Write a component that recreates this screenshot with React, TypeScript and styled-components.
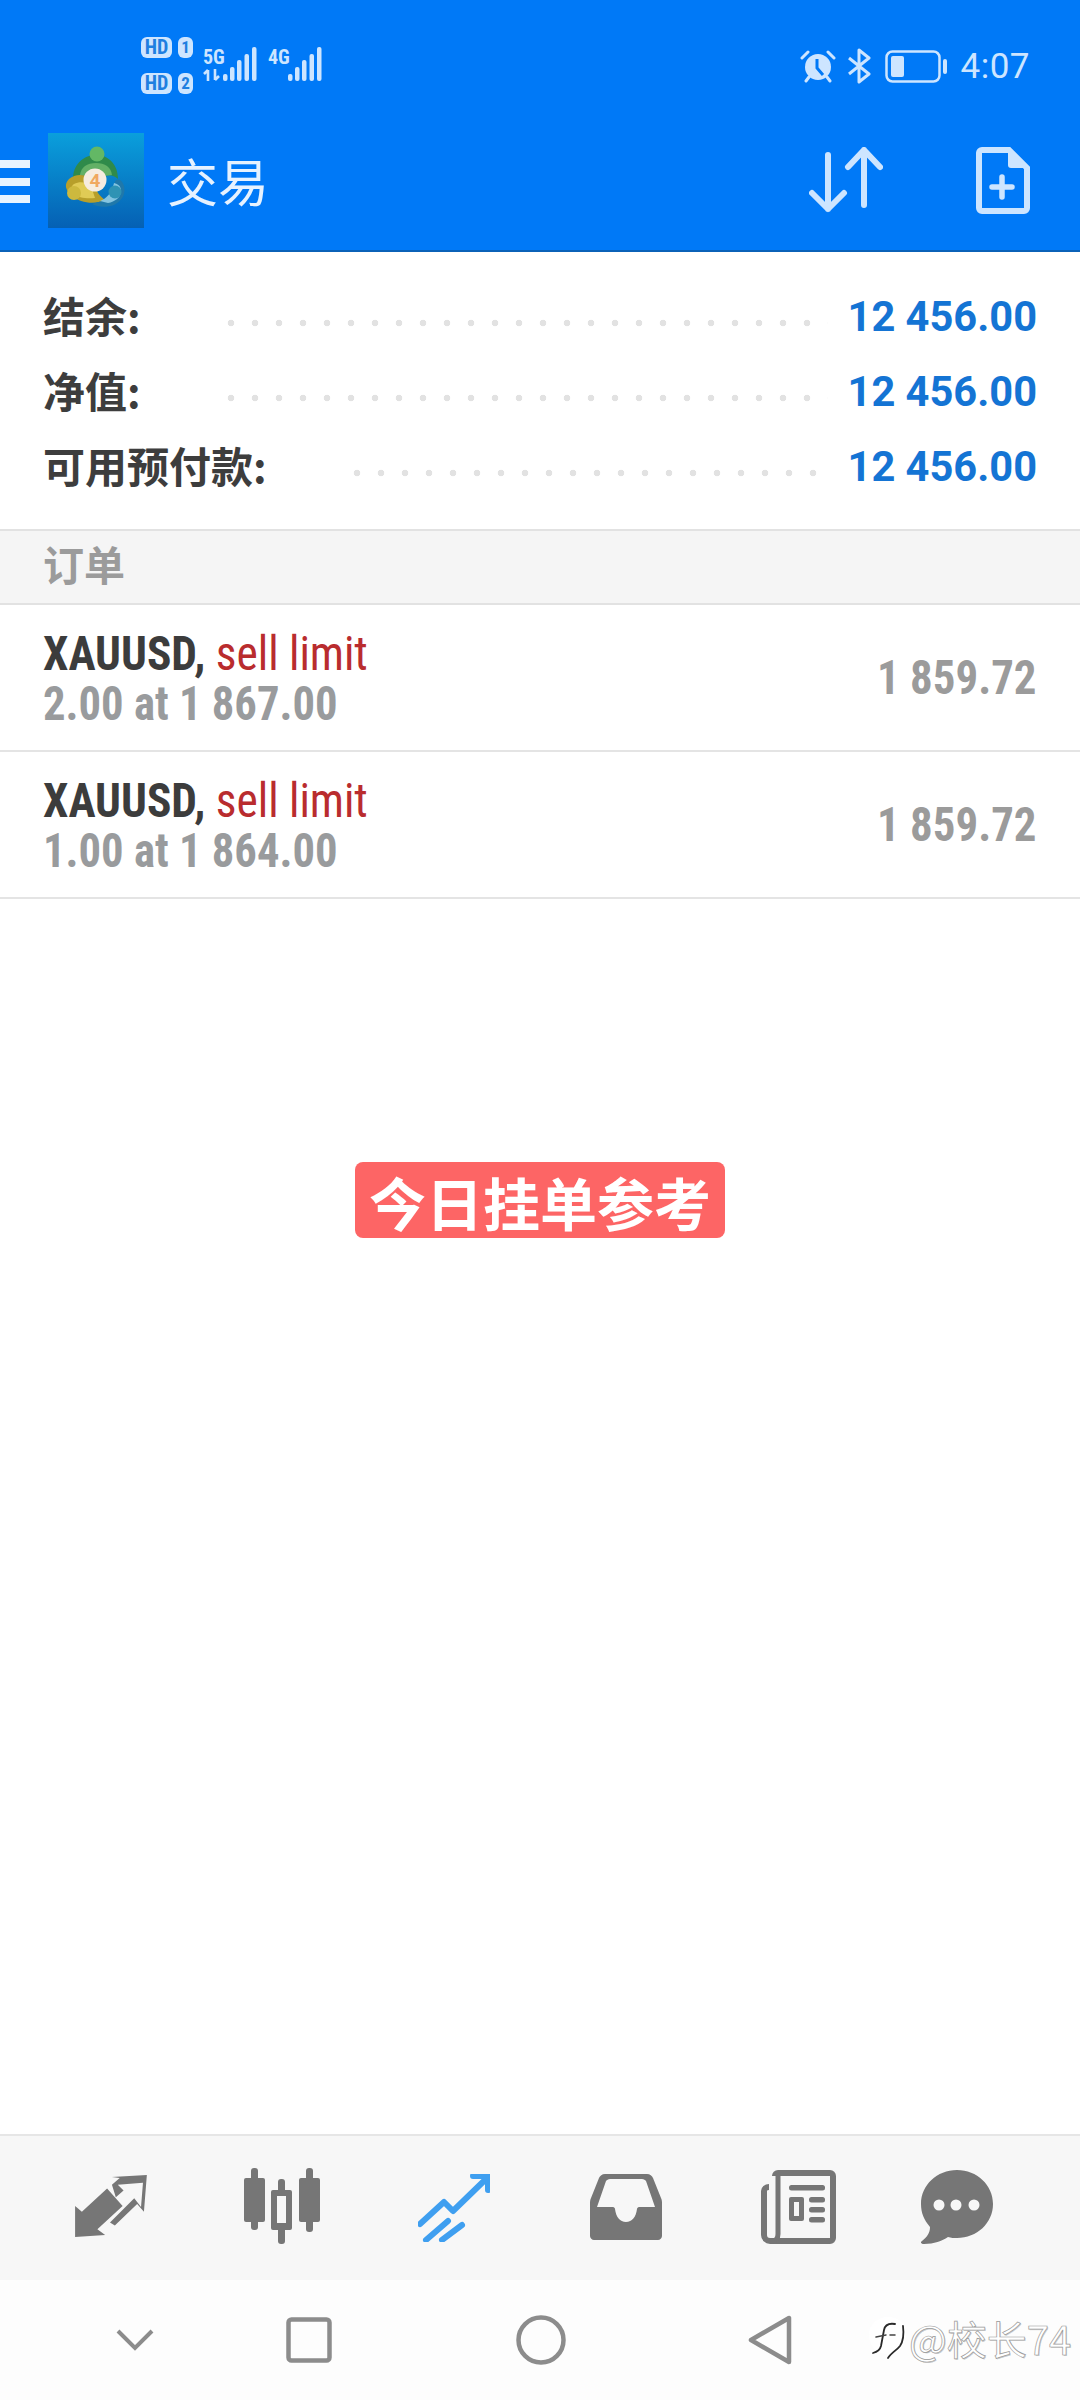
import React from 'react';
import styled, { createGlobalStyle } from 'styled-components';

const GlobalStyle = createGlobalStyle`
  html, body {
    margin: 0;
    padding: 0;
    background: #fff;
  }
  * {
    box-sizing: border-box;
  }
`;

const CJK = `"Noto Sans CJK SC", "Noto Sans", sans-serif`;
const LATIN = `Roboto, "Liberation Sans", sans-serif`;
const ICON_TINT = '#cde5ff';

const Page = styled.div`
  position: relative;
  width: 1080px;
  height: 2400px;
  display: flex;
  flex-direction: column;
  overflow: hidden;
  background: #fff;
`;

const Header = styled.header`
  height: 252px;
  flex: none;
  background: #0079f7;
  border-bottom: 2px solid #0b62b8;
  display: flex;
  flex-direction: column;
`;

const StatusBar = styled.div`
  height: 133px;
  flex: none;
  padding: 37px 50px 0 141px;
  display: flex;
  justify-content: space-between;
  align-items: flex-start;
  color: ${ICON_TINT};
`;

const StatusLeft = styled.div`
  display: flex;
  align-items: flex-start;
`;

const StatusRight = styled.div`
  display: flex;
  align-items: center;
  margin-top: 11px;
`;

const SimColumn = styled.div`
  display: flex;
  flex-direction: column;
  gap: 15px;
`;

const SimRow = styled.div`
  display: flex;
  gap: 6px;
`;

const HdBadge = styled.span`
  width: 31px;
  height: 21px;
  border-radius: 6px;
  background: ${ICON_TINT};
  color: #1f7fe0;
  font: 700 20px/21px ${LATIN};
  font-stretch: 75%;
  text-align: center;
`;

const SimBadge = styled(HdBadge)`
  width: 15px;
  font-size: 17px;
`;

const SignalGroup = styled.div<{ $left: number }>`
  margin-left: ${(p) => p.$left}px;
  margin-top: 10px;
  display: flex;
  align-items: flex-end;
`;

const NetworkStack = styled.div`
  width: 19px;
  height: 34px;
  display: flex;
  flex-direction: column;
  justify-content: space-between;
  font: 700 20px/20px ${LATIN};
  font-stretch: 75%;
`;

const Clock = styled.span`
  margin-left: 14px;
  font: 400 35px/1 ${LATIN};
  letter-spacing: 0.5px;
`;

const Toolbar = styled.div`
  flex: 1;
  display: flex;
  align-items: flex-start;
`;

const Burger = styled.div`
  width: 30px;
  height: 43px;
  margin-top: 27px;
  display: flex;
  flex-direction: column;
  justify-content: space-between;
  flex: none;
  span {
    height: 8px;
    background: #e8f4ff;
  }
`;

const Logo = styled.svg`
  width: 96px;
  height: 95px;
  margin-left: 18px;
  flex: none;
`;

const Title = styled.h1`
  margin: 17px 0 0 23px;
  flex: 1;
  color: #e6f2ff;
  font: 400 51px/60px ${CJK};
`;

const ToolbarActions = styled.div`
  display: flex;
  align-items: flex-start;
  padding: 14px 50px 0 0;
  gap: 92px;
`;

const Summary = styled.section`
  height: 277px;
  flex: none;
  padding: 29px 43px 0;
`;

const SummaryRow = styled.div`
  height: 75px;
  display: flex;
  align-items: center;
`;

const SummaryLabel = styled.span`
  margin-bottom: 8px;
  color: #3d3d3d;
  font: 700 42px/1 ${CJK};
`;

const Leader = styled.span`
  flex: 1;
  height: 8px;
  margin: 8px 20px 0 86px;
  background-image: radial-gradient(circle at 4px 4px, #e2e2e2 3px, transparent 3.6px);
  background-size: 24px 8px;
  background-repeat: repeat-x;
`;

const Amount = styled.span`
  margin-bottom: 3px;
  color: #1474d4;
  font: 700 41.6px/1 ${LATIN};
`;

const SectionHeading = styled.div`
  height: 76px;
  flex: none;
  padding: 0 0 8px 43px;
  display: flex;
  align-items: center;
  background: #f5f5f5;
  border-top: 2px solid #e2e2e2;
  border-bottom: 2px solid #e2e2e2;
  color: #9b9b9b;
  font: 700 41px/1 ${CJK};
`;

const OrderRow = styled.div`
  height: 147px;
  flex: none;
  padding: 0 43px;
  display: flex;
  align-items: center;
  justify-content: space-between;
  border-bottom: 2px solid #e4e4e4;
`;

const OrderInfo = styled.div`
  display: flex;
  flex-direction: column;
  margin-top: 2px;
`;

const OrderTitle = styled.div`
  height: 50px;
  font: 400 48px/50px ${LATIN};
  font-stretch: 75%;
  color: #b92c2e;
  white-space: nowrap;
  transform: scaleX(0.945);
  transform-origin: left center;
  b {
    font-weight: 700;
    color: #3c3c3c;
  }
`;

const OrderDetail = styled.div`
  height: 50px;
  font: 700 48px/50px ${LATIN};
  font-stretch: 75%;
  color: #999b9d;
  white-space: nowrap;
  transform: scaleX(0.93);
  transform-origin: left center;
`;

const OrderPrice = styled.div`
  font: 700 48px/1 ${LATIN};
  font-stretch: 75%;
  color: #9b9b9b;
  transform: scaleX(0.935);
  transform-origin: right center;
`;

const Notice = styled.div`
  align-self: center;
  margin-top: 263px;
  width: 370px;
  height: 76px;
  padding-top: 3px;
  border-radius: 8px;
  background: #fd6565;
  color: #fff;
  display: flex;
  align-items: center;
  justify-content: center;
  font: 700 57px/1 ${CJK};
`;

const Spacer = styled.div`
  flex: 1;
`;

const TabBar = styled.nav`
  height: 146px;
  flex: none;
  padding: 32px 0 0 24px;
  display: flex;
  align-items: flex-start;
  background: #f7f7f7;
  border-top: 2px solid #e6e6e6;
`;

const Tab = styled.div<{ $nudge?: number; $top?: number }>`
  width: 172px;
  margin-left: ${(p) => p.$nudge ?? 0}px;
  padding-top: ${(p) => p.$top ?? 0}px;
  display: flex;
  justify-content: center;
  flex: none;
`;

const SystemNav = styled.div`
  height: 120px;
  flex: none;
  padding-left: 116px;
  display: flex;
  align-items: center;
  background: #fdfdfd;
`;

const SystemKey = styled.svg<{ $left?: number }>`
  margin-left: ${(p) => p.$left ?? 0}px;
  flex: none;
  color: #8c8c8c;
`;

const Watermark = styled.div`
  position: absolute;
  left: 868px;
  top: 2314px;
  display: flex;
  align-items: center;
  gap: 1px;
  color: #fff;
  font: 400 40px/48px ${CJK};
  -webkit-text-stroke: 0.7px #9a9a9a;
  text-shadow: 1px 1px 0 rgba(0, 0, 0, 0.2);
  white-space: nowrap;
`;

const MetaLogo = () => (
  <Logo viewBox="0 0 96 95">
    <defs>
      <linearGradient id="logoBg" x1="0" y1="0" x2="0" y2="1">
        <stop offset="0" stopColor="#0a9fdc" />
        <stop offset="1" stopColor="#0560b4" />
      </linearGradient>
    </defs>
    <rect width="96" height="95" fill="url(#logoBg)" />
    <path d="M25 46c0-14 10-24 23-24s22 10 22 24c-6-5-10-5-22 0-10-5-17-5-23 0z" fill="#2f8a4a" />
    <path d="M32 42c1-8 7-12 16-12s15 4 16 12l-16 2z" fill="#63b066" />
    <circle cx="49" cy="21" r="7.500" fill="#63b865" />
    <path d="M21 46c7-6 17-5 24 1 2 8 4 14 12 20-10 5-25 3-33-4-7-6-8-12-3-17z" fill="#b79f2a" />
    <path d="M26 51c6-3 12-2 17 2l4 12c-8 1-17 0-21-5-3-4-3-7 0-9z" fill="#e0cb55" />
    <circle cx="26" cy="60" r="7" fill="#cdb93e" />
    <path d="M54 68c8-2 12-8 13-20 4-3 7-1 9 5 2 8-2 15-10 19-8 3-16 2-22-1z" fill="#1f78aa" />
    <path d="M52 68c6-2 12-8 14-18 4 1 7 3 7 8 0 6-6 11-13 12z" fill="#84c4e0" />
    <circle cx="67" cy="59" r="6.500" fill="#2f93b4" />
    <circle cx="47" cy="47" r="11.500" fill="#f6ece0" />
    <text x="47" y="54" textAnchor="middle" fontFamily="Roboto" fontWeight="700" fontSize="19" fill="#f0a860">
      4
    </text>
  </Logo>
);

const SignalBars = () => (
  <svg width="35" height="34" viewBox="0 0 35 34" fill={ICON_TINT}>
    <rect x="1" y="27" width="4.500" height="7" rx="2" />
    <rect x="8" y="20" width="4.500" height="14" rx="2" />
    <rect x="15" y="13" width="4.500" height="21" rx="2" />
    <rect x="22.500" y="7" width="4.500" height="27" rx="2" />
    <rect x="30" y="0" width="4.500" height="34" rx="2" />
  </svg>
);

const TransferArrows = () => (
  <svg width="18" height="12" viewBox="0 0 18 12" fill="none" stroke={ICON_TINT} strokeWidth="2.600">
    <path d="M5 12V1M1 5l4-4M12 0v11M16 7l-4 4" />
  </svg>
);

const AlarmIcon = () => (
  <svg width="36" height="33" viewBox="0 0 36 33" fill={ICON_TINT}>
    <circle cx="18" cy="17" r="13" />
    <path d="M2 8l6-6M34 8l-6-6M6 31l3-4M30 31l-3-4" stroke={ICON_TINT} strokeWidth="3" strokeLinecap="round" />
    <path d="M17 9v9l6 7" stroke="#0079f7" strokeWidth="3" fill="none" />
  </svg>
);

const BluetoothIcon = () => (
  <svg width="24" height="36" viewBox="0 0 24 36" fill="none" stroke={ICON_TINT} strokeWidth="3" style={{ marginLeft: 11 }}>
    <path d="M2 10l20 16-10 8V2l10 8L2 26" strokeLinejoin="round" />
  </svg>
);

const BatteryIcon = () => (
  <svg width="62" height="33" viewBox="0 0 62 33" style={{ marginLeft: 14 }}>
    <rect x="1.500" y="1.500" width="53" height="30" rx="6" fill="none" stroke={ICON_TINT} strokeWidth="2.500" />
    <rect x="6" y="6" width="13" height="21" rx="2" fill={ICON_TINT} />
    <rect x="58" y="9" width="4" height="15" rx="2" fill={ICON_TINT} />
  </svg>
);

const SortIcon = () => (
  <svg width="74" height="66" viewBox="0 0 74 66" fill="none" stroke={ICON_TINT} strokeWidth="6" strokeLinecap="round" strokeLinejoin="round">
    <path d="M19 8v54M3 46l16 16 16-16" />
    <path d="M55 58V3M39 20L55 3l16 17" />
  </svg>
);

const NewOrderIcon = () => (
  <svg width="55" height="67" viewBox="0 0 55 67" fill="none">
    <path
      d="M7 3h27l18 18v40a3 3 0 0 1-3 3H7a3 3 0 0 1-3-3V6a3 3 0 0 1 3-3z"
      stroke={ICON_TINT}
      strokeWidth="6"
    />
    <path d="M33 3v15a3 3 0 0 0 3 3h16z" fill={ICON_TINT} />
    <path d="M27 30v20M17 40h20" stroke={ICON_TINT} strokeWidth="5.500" strokeLinecap="round" />
  </svg>
);

const TradeIcon = () => (
  <svg width="74" height="64" viewBox="0 0 76 66" fill="#767676">
    <path d="M2 64V32l7 6L35 14l16 18-26 24 8 6z" />
    <path d="M40 10l8-7-8-1 36-2-3 38-7-8-23 22-5-3 25-25 7 9 2-25-26 2 6 6-8 7z" />
  </svg>
);

const CandlesIcon = () => (
  <svg width="76" height="76" viewBox="0 0 76 76" fill="#767676">
    <rect x="0" y="10" width="21" height="44" rx="2" />
    <rect x="7" y="0" width="7" height="62" rx="3" />
    <rect x="55" y="10" width="21" height="44" rx="2" />
    <rect x="62" y="0" width="7" height="64" rx="3" />
    <rect x="27" y="22" width="21" height="40" rx="2" />
    <rect x="34" y="11" width="7" height="65" rx="3" />
    <rect x="33" y="28" width="9" height="27" fill="#f7f7f7" />
  </svg>
);

const TradesIcon = () => (
  <svg width="72" height="68" viewBox="0 0 72 68" fill="none" stroke="#3f9ff0" strokeWidth="6" strokeLinecap="round" strokeLinejoin="round">
    <path d="M2 50l24-22 9 9 33-32" />
    <path d="M55 2h15v14" />
    <path d="M8 66l22-19M24 66l20-15" />
  </svg>
);

const InboxIcon = () => (
  <svg width="72" height="66" viewBox="0 0 72 66">
    <path
      fillRule="evenodd"
      fill="#767676"
      d="M15 0h42c3 0 5 2 6 4l8 20c1 2 1 4 1 6v32c0 2-2 4-4 4H4c-2 0-4-2-4-4V30c0-2 0-4 1-6L9 4c1-2 3-4 6-4zM16 7l-9 26h16c1 0 2 1 2 2 1 8 5 13 11 13s10-5 11-13c0-1 1-2 2-2h16L56 7c-1-1-2-2-4-2H20c-2 0-3 1-4 2z"
    />
  </svg>
);

const NewsIcon = () => (
  <svg width="75" height="74" viewBox="0 0 75 74" fill="none">
    <path d="M14 6a3 3 0 0 1 3-3h52a3 3 0 0 1 3 3v62a3 3 0 0 1-3 3H9a6 6 0 0 1-6-6V21c0-2 2-4 5-4" stroke="#767676" strokeWidth="6" />
    <path d="M17 4v60c0 4-2 7-6 7" stroke="#767676" strokeWidth="5" />
    <rect x="28" y="15" width="36" height="5.500" rx="2.500" fill="#767676" />
    <rect x="28" y="27" width="15" height="24" rx="2" fill="#767676" />
    <rect x="33" y="32" width="5" height="14" fill="#f7f7f7" />
    <rect x="48" y="27" width="16" height="5.500" rx="2.500" fill="#767676" />
    <rect x="48" y="37" width="16" height="5.500" rx="2.500" fill="#767676" />
    <rect x="48" y="47" width="16" height="5.500" rx="2.500" fill="#767676" />
  </svg>
);

const ChatIcon = () => (
  <svg width="73" height="74" viewBox="0 0 73 74">
    <path
      fill="#767676"
      d="M37 0c20 0 36 15 36 34S57 68 37 68c-3 0-6 0-9-1-6 4-14 7-24 7-3 0-4-2-2-3 5-4 8-8 8-14C4 50 1 43 1 34 1 15 17 0 37 0z"
    />
    <circle cx="19" cy="35" r="5.500" fill="#f7f7f7" />
    <circle cx="36" cy="35" r="5.500" fill="#f7f7f7" />
    <circle cx="54" cy="35" r="5.500" fill="#f7f7f7" />
  </svg>
);

const NoteMark = () => (
  <svg width="40" height="44" viewBox="0 0 40 44" fill="none">
    <path d="M20 1c11 0 18 7 18 17 0 9-4 16-12 20-4 2-6 4-7 5-1-2 0-4 0-5C8 38 1 29 1 19 1 9 9 1 20 1z" fill="#fff" />
    <path d="M35 10c1 8 1 14-3 20-3 4-9 7-12 12" stroke="#2a2a2a" strokeWidth="1.800" strokeLinecap="round" />
    <path d="M27 8c-6-1-10 1-11 6l-3 16c-1 4-4 6-8 7" stroke="#2a2a2a" strokeWidth="1.800" strokeLinecap="round" />
    <path d="M8 21l10-2M22 19h5" stroke="#444" strokeWidth="1.500" strokeLinecap="round" />
  </svg>
);

const SUMMARY = [
  { label: '结余:', value: '12 456.00' },
  { label: '净值:', value: '12 456.00' },
  { label: '可用预付款:', value: '12 456.00' },
];

const ORDERS = [
  { detail: '2.00 at 1 867.00', price: '1 859.72' },
  { detail: '1.00 at 1 864.00', price: '1 859.72' },
];

export default function App() {
  return (
    <Page>
      <GlobalStyle />
      <Header>
        <StatusBar>
          <StatusLeft>
            <SimColumn>
              <SimRow>
                <HdBadge>HD</HdBadge>
                <SimBadge>1</SimBadge>
              </SimRow>
              <SimRow>
                <HdBadge>HD</HdBadge>
                <SimBadge>2</SimBadge>
              </SimRow>
            </SimColumn>
            <SignalGroup $left={10}>
              <NetworkStack>
                <span>5G</span>
                <TransferArrows />
              </NetworkStack>
              <SignalBars />
            </SignalGroup>
            <SignalGroup $left={11}>
              <NetworkStack>
                <span>4G</span>
              </NetworkStack>
              <SignalBars />
            </SignalGroup>
          </StatusLeft>
          <StatusRight>
            <AlarmIcon />
            <BluetoothIcon />
            <BatteryIcon />
            <Clock>4:07</Clock>
          </StatusRight>
        </StatusBar>
        <Toolbar>
          <Burger>
            <span />
            <span />
            <span />
          </Burger>
          <MetaLogo />
          <Title>交易</Title>
          <ToolbarActions>
            <SortIcon />
            <NewOrderIcon />
          </ToolbarActions>
        </Toolbar>
      </Header>
      <Summary>
        {SUMMARY.map((row) => (
          <SummaryRow key={row.label}>
            <SummaryLabel>{row.label}</SummaryLabel>
            <Leader />
            <Amount>{row.value}</Amount>
          </SummaryRow>
        ))}
      </Summary>
      <SectionHeading>订单</SectionHeading>
      {ORDERS.map((order) => (
        <OrderRow key={order.detail}>
          <OrderInfo>
            <OrderTitle>
              <b>XAUUSD,</b> sell limit
            </OrderTitle>
            <OrderDetail>{order.detail}</OrderDetail>
          </OrderInfo>
          <OrderPrice>{order.price}</OrderPrice>
        </OrderRow>
      ))}
      <Notice>今日挂单参考</Notice>
      <Spacer />
      <TabBar>
        <Tab $top={7}>
          <TradeIcon />
        </Tab>
        <Tab>
          <CandlesIcon />
        </Tab>
        <Tab $top={6}>
          <TradesIcon />
        </Tab>
        <Tab $top={6}>
          <InboxIcon />
        </Tab>
        <Tab $top={2}>
          <NewsIcon />
        </Tab>
        <Tab $nudge={-14} $top={2}>
          <ChatIcon />
        </Tab>
      </TabBar>
      <SystemNav>
        <SystemKey width="38" height="22" viewBox="0 0 38 22" fill="none" stroke="currentColor" strokeWidth="4">
          <path d="M2 2l17 17L36 2" />
        </SystemKey>
        <SystemKey $left={132} width="46" height="46" viewBox="0 0 46 46" fill="none" stroke="currentColor" strokeWidth="4.500">
          <rect x="2.500" y="2.500" width="41" height="41" rx="3" />
        </SystemKey>
        <SystemKey $left={184} width="50" height="50" viewBox="0 0 50 50" fill="none" stroke="currentColor" strokeWidth="4.500">
          <circle cx="25" cy="25" r="22.500" />
        </SystemKey>
        <SystemKey $left={182} width="44" height="50" viewBox="0 0 44 50" fill="none" stroke="currentColor" strokeWidth="4.500" strokeLinejoin="round">
          <path d="M41 3v44L3 25z" />
        </SystemKey>
      </SystemNav>
      <Watermark>
        <NoteMark />
        <span>@校长74</span>
      </Watermark>
    </Page>
  );
}
